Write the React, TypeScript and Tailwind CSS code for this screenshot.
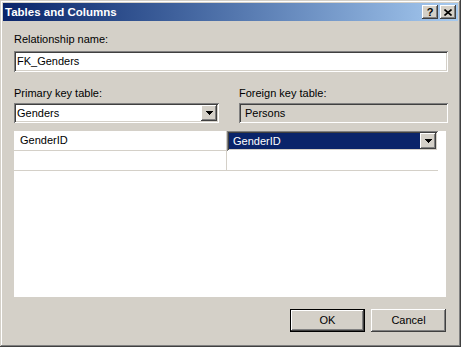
import React from "react";

const raised =
  "shadow-[inset_-1px_-1px_#404040,inset_1px_1px_#ffffff,inset_-2px_-2px_#808080,inset_2px_2px_#d4d0c8]";
const sunken =
  "shadow-[inset_1px_1px_#808080,inset_-1px_-1px_#ffffff,inset_2px_2px_#404040,inset_-2px_-2px_#d4d0c8]";

function DropArrow() {
  return (
    <div className={`w-[16px] h-[16px] bg-[#d4d0c8] flex items-center justify-center ${raised}`}>
      <svg width="7" height="4" viewBox="0 0 7 4" shapeRendering="crispEdges">
        <polygon points="0,0 7,0 3.5,4" fill="#000" />
      </svg>
    </div>
  );
}

function TitleButton({ children }: { children: React.ReactNode }) {
  return (
    <div
      className={`w-[16px] h-[14px] bg-[#d4d0c8] flex items-center justify-center text-black font-bold text-[11px] leading-none ${raised}`}
    >
      {children}
    </div>
  );
}

function App() {
  return (
    <div
      className="w-[461px] h-[347px] bg-[#d4d0c8] p-[3px] flex flex-col text-[11px] leading-[13px] text-black shadow-[inset_-1px_-1px_#404040,inset_1px_1px_#d4d0c8,inset_-2px_-2px_#808080,inset_2px_2px_#ffffff]"
      style={{ fontFamily: '"Liberation Sans", Arial, sans-serif' }}
    >
      {/* title bar */}
      <div className="h-[18px] flex items-center justify-between bg-linear-to-r from-[#0a246a] to-[#a6caf0] pl-[2px] pr-[2px]">
        <span className="text-white font-bold text-[11.5px]">Tables and Columns</span>
        <div className="flex gap-[2px]">
          <TitleButton>?</TitleButton>
          <TitleButton>
            <svg width="8" height="7" viewBox="0 0 8 7">
              <path d="M0.5 0.5 L7.5 6.5 M7.5 0.5 L0.5 6.5" stroke="#000" strokeWidth="1.6" />
            </svg>
          </TitleButton>
        </div>
      </div>

      <div className="flex-1 flex flex-col pl-[11px] pr-[10px]">
        <div className="mt-[12px]">Relationship name:</div>
        <div className={`mt-[5px] h-[21px] bg-white flex items-center pl-[3px] ${sunken}`}>FK_Genders</div>

        <div className="mt-[15px] flex gap-[20px]">
          <div className="w-[205px] flex flex-col">
            <div>Primary key table:</div>
            <div className={`mt-[3px] h-[20px] bg-white flex items-center justify-between pl-[3px] pr-[2px] ${sunken}`}>
              <span>Genders</span>
              <DropArrow />
            </div>
          </div>
          <div className="flex-1 flex flex-col">
            <div>Foreign key table:</div>
            <div className={`mt-[3px] h-[20px] bg-[#d4d0c8] flex items-center pl-[6px] ${sunken}`}>Persons</div>
          </div>
        </div>

        {/* column grid */}
        <div className="mt-[8px] mr-[2px] h-[166px] bg-white">
          <div className="w-[424px]">
            <div className="flex h-[20px] border-b border-[#d4d0c8]">
              <div className="w-[213px] border-r border-[#d4d0c8] pl-[6px] flex items-center">GenderID</div>
              <div className={`flex-1 h-[20px] bg-[#0a246a] text-white flex items-center justify-between pl-[6px] pr-[2px] ${sunken}`}>
                <span>GenderID</span>
                <DropArrow />
              </div>
            </div>
            <div className="flex h-[20px] border-b border-[#d4d0c8]">
              <div className="w-[213px] border-r border-[#d4d0c8]"></div>
              <div className="flex-1"></div>
            </div>
          </div>
        </div>

        <div className="mt-[12px] mr-[2px] flex justify-end gap-[6px]">
          <div className="w-[75px] h-[23px] border border-black">
            <div className={`w-full h-full bg-[#d4d0c8] flex items-center justify-center ${raised}`}>OK</div>
          </div>
          <div className={`w-[75px] h-[23px] bg-[#d4d0c8] flex items-center justify-center ${raised}`}>Cancel</div>
        </div>
      </div>
    </div>
  );
}

export default App;
